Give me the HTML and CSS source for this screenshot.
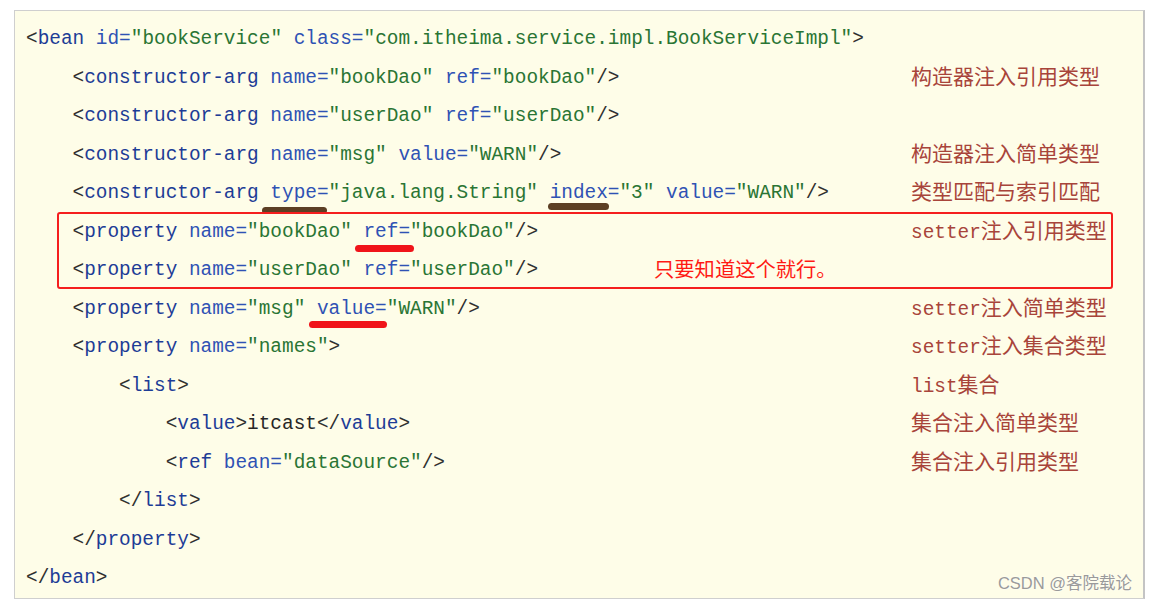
FILE: index.html
```html
<!DOCTYPE html>
<html lang="zh-CN">
<head>
<meta charset="utf-8">
<title>bean config</title>
<link rel="stylesheet" href="styles.css">
</head>
<body>
<div class="panel">
  <div class="row"><div class="code"><span class="p">&lt;</span><span class="t">bean</span> <span class="a">id=</span><span class="v">"bookService"</span> <span class="a">class=</span><span class="v">"com.itheima.service.impl.BookServiceImpl"</span><span class="p">&gt;</span></div><div class="note"></div></div>
  <div class="row"><div class="code i1"><span class="p">&lt;</span><span class="t">constructor-arg</span> <span class="a">name=</span><span class="v">"bookDao"</span> <span class="a">ref=</span><span class="v">"bookDao"</span><span class="p">/&gt;</span></div><div class="note">构造器注入引用类型</div></div>
  <div class="row"><div class="code i1"><span class="p">&lt;</span><span class="t">constructor-arg</span> <span class="a">name=</span><span class="v">"userDao"</span> <span class="a">ref=</span><span class="v">"userDao"</span><span class="p">/&gt;</span></div><div class="note"></div></div>
  <div class="row"><div class="code i1"><span class="p">&lt;</span><span class="t">constructor-arg</span> <span class="a">name=</span><span class="v">"msg"</span> <span class="a">value=</span><span class="v">"WARN"</span><span class="p">/&gt;</span></div><div class="note">构造器注入简单类型</div></div>
  <div class="row"><div class="code i1"><span class="p">&lt;</span><span class="t">constructor-arg</span> <span class="a mark brown m-type">type=</span><span class="v">"java.lang.String"</span> <span class="a mark brown m-index">index=</span><span class="v">"3"</span> <span class="a">value=</span><span class="v">"WARN"</span><span class="p">/&gt;</span></div><div class="note">类型匹配与索引匹配</div></div>
  <div class="group">
    <div class="row"><div class="code i1"><span class="p">&lt;</span><span class="t">property</span> <span class="a">name=</span><span class="v">"bookDao"</span> <span class="a mark red m-ref">ref=</span><span class="v">"bookDao"</span><span class="p">/&gt;</span></div><div class="note"><span class="en">setter</span>注入引用类型</div></div>
    <div class="row"><div class="code i1"><span class="p">&lt;</span><span class="t">property</span> <span class="a">name=</span><span class="v">"userDao"</span> <span class="a">ref=</span><span class="v">"userDao"</span><span class="p">/&gt;</span><span class="hint">只要知道这个就行。</span></div><div class="note"></div></div>
  </div>
  <div class="row"><div class="code i1"><span class="p">&lt;</span><span class="t">property</span> <span class="a">name=</span><span class="v">"msg"</span> <span class="a mark red m-value">value=</span><span class="v">"WARN"</span><span class="p">/&gt;</span></div><div class="note"><span class="en">setter</span>注入简单类型</div></div>
  <div class="row"><div class="code i1"><span class="p">&lt;</span><span class="t">property</span> <span class="a">name=</span><span class="v">"names"</span><span class="p">&gt;</span></div><div class="note"><span class="en">setter</span>注入集合类型</div></div>
  <div class="row"><div class="code i2"><span class="p">&lt;</span><span class="t">list</span><span class="p">&gt;</span></div><div class="note"><span class="en">list</span>集合</div></div>
  <div class="row"><div class="code i3"><span class="p">&lt;</span><span class="t">value</span><span class="p">&gt;</span><span class="x">itcast</span><span class="p">&lt;/</span><span class="t">value</span><span class="p">&gt;</span></div><div class="note">集合注入简单类型</div></div>
  <div class="row"><div class="code i3"><span class="p">&lt;</span><span class="t">ref</span> <span class="a">bean=</span><span class="v">"dataSource"</span><span class="p">/&gt;</span></div><div class="note">集合注入引用类型</div></div>
  <div class="row"><div class="code i2"><span class="p">&lt;/</span><span class="t">list</span><span class="p">&gt;</span></div><div class="note"></div></div>
  <div class="row"><div class="code i1"><span class="p">&lt;/</span><span class="t">property</span><span class="p">&gt;</span></div><div class="note"></div></div>
  <div class="row"><div class="code"><span class="p">&lt;/</span><span class="t">bean</span><span class="p">&gt;</span></div><div class="note"></div></div>
  <div class="watermark">CSDN @客院载论</div>
</div>
</body>
</html>
```

FILE: styles.css
```css
html, body {
  margin: 0;
  padding: 0;
  background: #ffffff;
}

.panel {
  position: relative;
  box-sizing: border-box;
  width: 1131px;
  margin: 10px 0 0 14px;
  padding: 8px 0 1px 11px;
  background: #fefde8;
  border: 1px solid #cfcfcf;
  border-right: 2px solid #c4c4c4;
}

.row {
  display: grid;
  grid-template-columns: 885px 1fr;
  height: 38.5px;
  line-height: 38.5px;
}

.code {
  font-family: "Liberation Mono", "DejaVu Sans Mono", monospace;
  font-size: 19.4px;
  white-space: pre;
  color: #2b2b2b;
  padding-top: 1px;
}

.i1 { padding-left: 4ch; }
.i2 { padding-left: 8ch; }
.i3 { padding-left: 12ch; }

.p { color: #303030; }
.t { color: #1d3c96; }
.a { color: #2f52b4; }
.v { color: #2a7534; }
.x { color: #262626; }

.note {
  font-family: "Noto Sans CJK SC", sans-serif;
  font-size: 21px;
  line-height: 35px;
  color: #a8443a;
  white-space: nowrap;
}

.note .en {
  font-family: "Liberation Mono", "DejaVu Sans Mono", monospace;
  font-size: 19.4px;
}

.group {
  position: relative;
}

.group::before {
  content: "";
  position: absolute;
  left: 31px;
  width: 1052px;
  top: 0;
  bottom: 0;
  border: 2px solid #f51e1e;
  border-radius: 3px;
  pointer-events: none;
}

.hint {
  display: inline-block;
  vertical-align: top;
  line-height: 35px;
  margin-left: 116px;
  font-family: "Noto Sans CJK SC", sans-serif;
  font-size: 20.3px;
  color: #ff1a14;
}

.mark {
  position: relative;
}

.mark::after {
  content: "";
  position: absolute;
  height: 7px;
  border-radius: 4px;
}

.brown::after { background: #4a2a0e; opacity: 0.9; }
.red::after { background: #f0141a; }

.m-type::after { left: -8px; right: 2px; bottom: -10px; }
.m-index::after { left: -2px; right: 10px; bottom: -6px; }
.m-ref::after { left: -8px; right: -4px; bottom: -9px; }
.m-value::after { left: -8px; right: 0; bottom: -8px; }

.watermark {
  position: absolute;
  right: 11px;
  bottom: 4px;
  font-family: "Liberation Sans", "Noto Sans CJK SC", sans-serif;
  font-size: 16.5px;
  color: #9a9a9a;
  text-shadow: 0 0 2px #ffffff;
}
```
